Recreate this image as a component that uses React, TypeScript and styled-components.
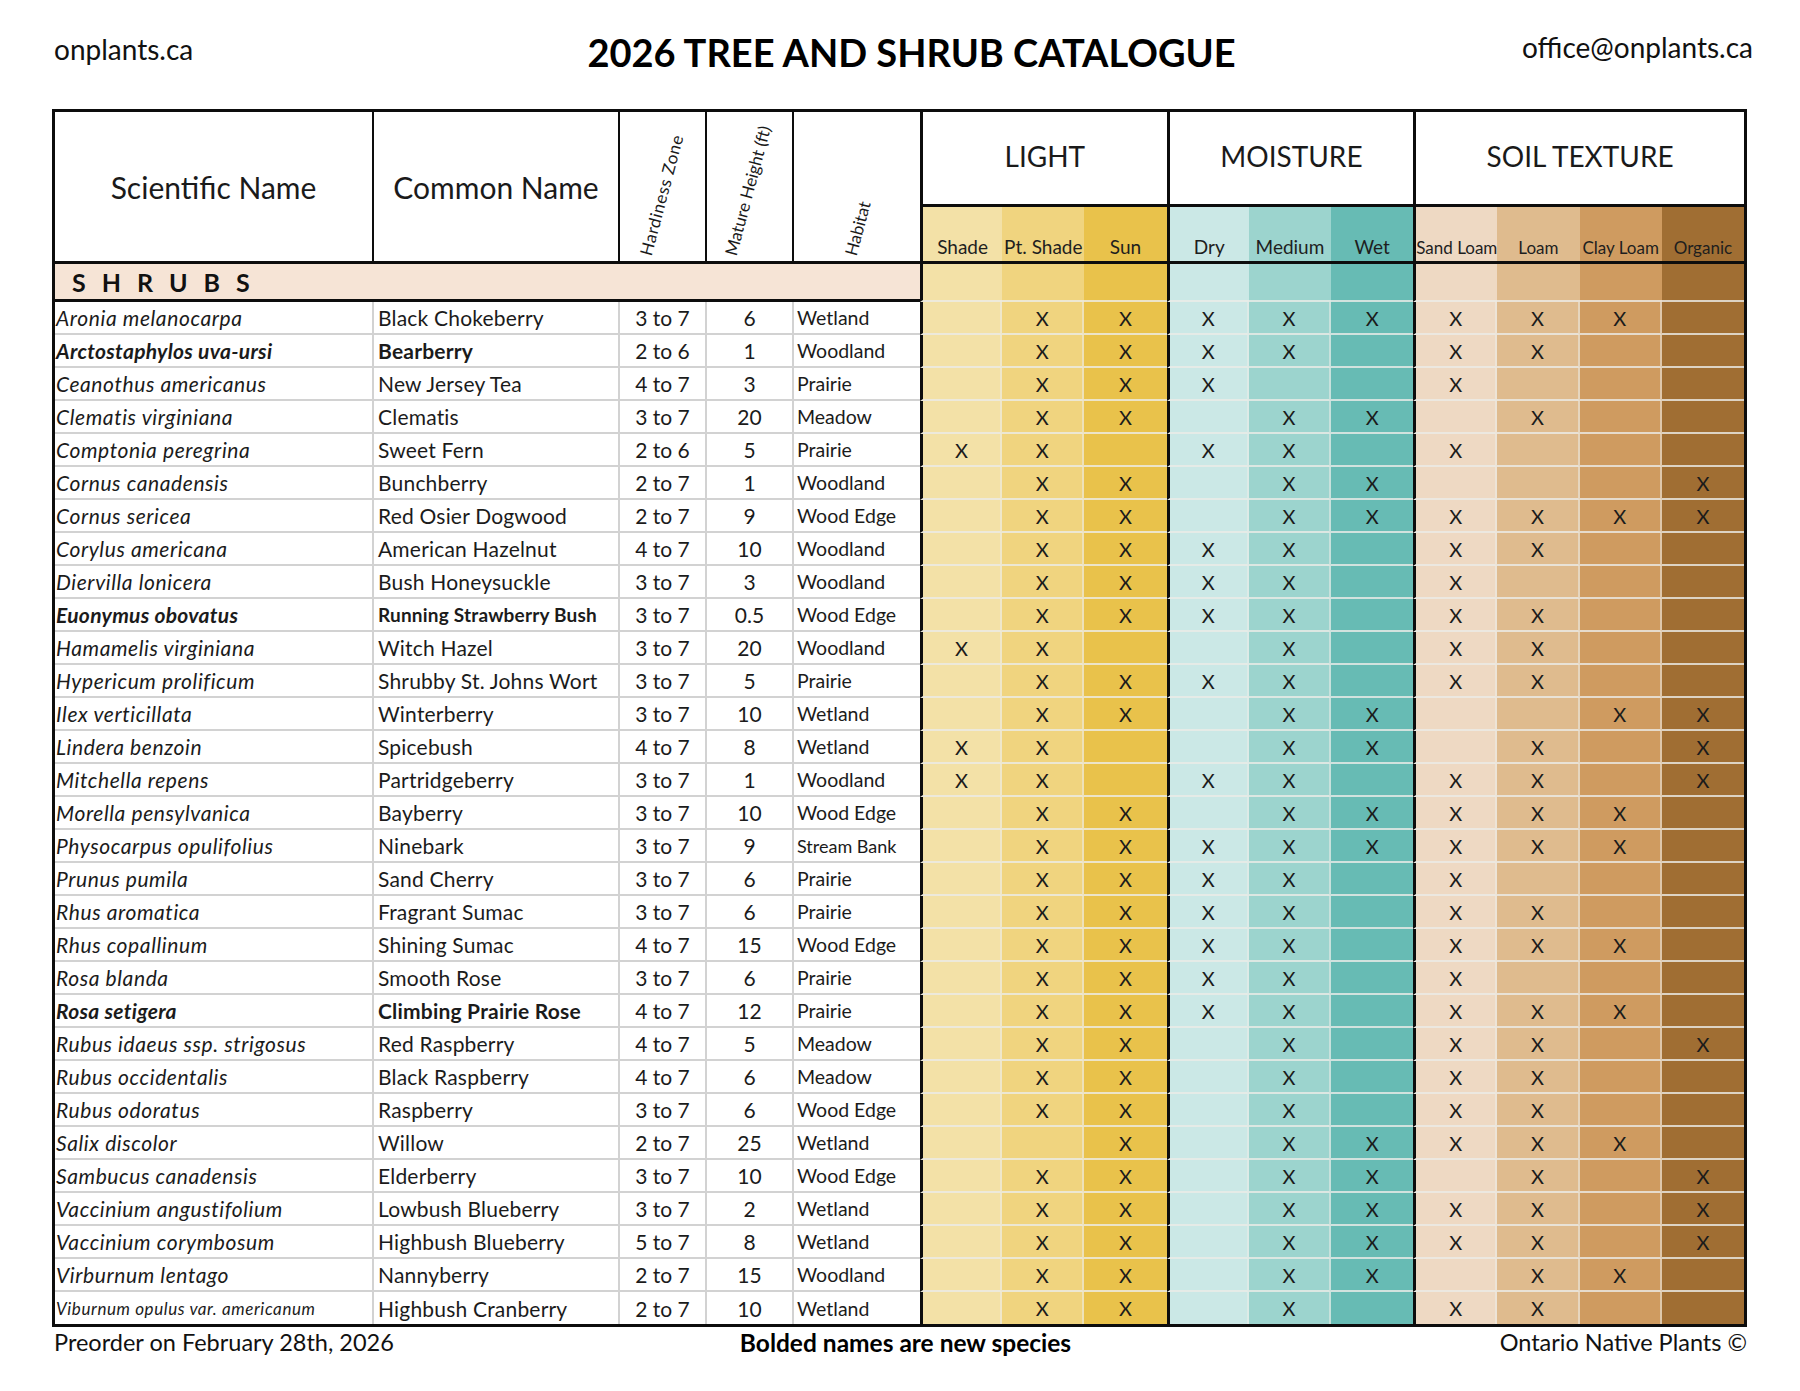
import React from "react";
import styled, { createGlobalStyle, css } from "styled-components";

const GlobalStyle = createGlobalStyle`
  html, body { margin: 0; padding: 0; background: #ffffff; }
  body { font-family: Lato, "Liberation Sans", Arial, sans-serif; color: #1b1b1b; }
  * { box-sizing: border-box; }
`;

type Col = { key: string; label: string; bg: string; start?: boolean; end?: boolean; small?: boolean };

const COLS: Col[] = [
  { key: "shade", label: "Shade", bg: "#f3e1a7", start: true },
  { key: "pt", label: "Pt. Shade", bg: "#f0d47f" },
  { key: "sun", label: "Sun", bg: "#e9c24b", end: true },
  { key: "dry", label: "Dry", bg: "#cbe8e6", start: true },
  { key: "med", label: "Medium", bg: "#9cd4ce" },
  { key: "wet", label: "Wet", bg: "#67bbb4", end: true },
  { key: "sand", label: "Sand Loam", bg: "#eed9c3", start: true, small: true },
  { key: "loam", label: "Loam", bg: "#dfbb8e", small: true },
  { key: "clay", label: "Clay Loam", bg: "#cf9b60", small: true },
  { key: "org", label: "Organic", bg: "#a06e33", end: true, small: true },
];

type Row = {
  sci: string;
  common: string;
  zone: string;
  height: string;
  habitat: string;
  marks: string;
  isNew?: boolean;
  sciSmall?: boolean;
  commonSmall?: boolean;
  habitatSmall?: boolean;
};

const ROWS: Row[] = [
  { sci: "Aronia melanocarpa", common: "Black Chokeberry", zone: "3 to 7", height: "6", habitat: "Wetland", marks: ".XXXXXXXX." },
  { sci: "Arctostaphylos uva-ursi", common: "Bearberry", zone: "2 to 6", height: "1", habitat: "Woodland", marks: ".XXXX.XX..", isNew: true },
  { sci: "Ceanothus americanus", common: "New Jersey Tea", zone: "4 to 7", height: "3", habitat: "Prairie", marks: ".XXX..X..." },
  { sci: "Clematis virginiana", common: "Clematis", zone: "3 to 7", height: "20", habitat: "Meadow", marks: ".XX.XX.X.." },
  { sci: "Comptonia peregrina", common: "Sweet Fern", zone: "2 to 6", height: "5", habitat: "Prairie", marks: "XX.XX.X..." },
  { sci: "Cornus canadensis", common: "Bunchberry", zone: "2 to 7", height: "1", habitat: "Woodland", marks: ".XX.XX...X" },
  { sci: "Cornus sericea", common: "Red Osier Dogwood", zone: "2 to 7", height: "9", habitat: "Wood Edge", marks: ".XX.XXXXXX" },
  { sci: "Corylus americana", common: "American Hazelnut", zone: "4 to 7", height: "10", habitat: "Woodland", marks: ".XXXX.XX.." },
  { sci: "Diervilla lonicera", common: "Bush Honeysuckle", zone: "3 to 7", height: "3", habitat: "Woodland", marks: ".XXXX.X..." },
  { sci: "Euonymus obovatus", common: "Running Strawberry Bush", zone: "3 to 7", height: "0.5", habitat: "Wood Edge", marks: ".XXXX.XX..", isNew: true, commonSmall: true },
  { sci: "Hamamelis virginiana", common: "Witch Hazel", zone: "3 to 7", height: "20", habitat: "Woodland", marks: "XX..X.XX.." },
  { sci: "Hypericum prolificum", common: "Shrubby St. Johns Wort", zone: "3 to 7", height: "5", habitat: "Prairie", marks: ".XXXX.XX.." },
  { sci: "Ilex verticillata", common: "Winterberry", zone: "3 to 7", height: "10", habitat: "Wetland", marks: ".XX.XX..XX" },
  { sci: "Lindera benzoin", common: "Spicebush", zone: "4 to 7", height: "8", habitat: "Wetland", marks: "XX..XX.X.X" },
  { sci: "Mitchella repens", common: "Partridgeberry", zone: "3 to 7", height: "1", habitat: "Woodland", marks: "XX.XX.XX.X" },
  { sci: "Morella pensylvanica", common: "Bayberry", zone: "3 to 7", height: "10", habitat: "Wood Edge", marks: ".XX.XXXXX." },
  { sci: "Physocarpus opulifolius", common: "Ninebark", zone: "3 to 7", height: "9", habitat: "Stream Bank", marks: ".XXXXXXXX.", habitatSmall: true },
  { sci: "Prunus pumila", common: "Sand Cherry", zone: "3 to 7", height: "6", habitat: "Prairie", marks: ".XXXX.X..." },
  { sci: "Rhus aromatica", common: "Fragrant Sumac", zone: "3 to 7", height: "6", habitat: "Prairie", marks: ".XXXX.XX.." },
  { sci: "Rhus copallinum", common: "Shining Sumac", zone: "4 to 7", height: "15", habitat: "Wood Edge", marks: ".XXXX.XXX." },
  { sci: "Rosa blanda", common: "Smooth Rose", zone: "3 to 7", height: "6", habitat: "Prairie", marks: ".XXXX.X..." },
  { sci: "Rosa setigera", common: "Climbing Prairie Rose", zone: "4 to 7", height: "12", habitat: "Prairie", marks: ".XXXX.XXX.", isNew: true },
  { sci: "Rubus idaeus ssp. strigosus", common: "Red Raspberry", zone: "4 to 7", height: "5", habitat: "Meadow", marks: ".XX.X.XX.X" },
  { sci: "Rubus occidentalis", common: "Black Raspberry", zone: "4 to 7", height: "6", habitat: "Meadow", marks: ".XX.X.XX.." },
  { sci: "Rubus odoratus", common: "Raspberry", zone: "3 to 7", height: "6", habitat: "Wood Edge", marks: ".XX.X.XX.." },
  { sci: "Salix discolor", common: "Willow", zone: "2 to 7", height: "25", habitat: "Wetland", marks: "..X.XXXXX." },
  { sci: "Sambucus canadensis", common: "Elderberry", zone: "3 to 7", height: "10", habitat: "Wood Edge", marks: ".XX.XX.X.X" },
  { sci: "Vaccinium angustifolium", common: "Lowbush Blueberry", zone: "3 to 7", height: "2", habitat: "Wetland", marks: ".XX.XXXX.X" },
  { sci: "Vaccinium corymbosum", common: "Highbush Blueberry", zone: "5 to 7", height: "8", habitat: "Wetland", marks: ".XX.XXXX.X" },
  { sci: "Virburnum lentago", common: "Nannyberry", zone: "2 to 7", height: "15", habitat: "Woodland", marks: ".XX.XX.XX." },
  { sci: "Viburnum opulus var. americanum", common: "Highbush Cranberry", zone: "2 to 7", height: "10", habitat: "Wetland", marks: ".XX.X.XX..", sciSmall: true },
];

const Page = styled.div`
  width: 1800px;
  min-height: 1391px;
  background: #fff;
`;

const TopBar = styled.header`
  display: grid;
  grid-template-columns: 1fr auto 1fr;
  align-items: start;
  height: 109px;
  padding: 0 47px 0 54px;
`;

const SiteName = styled.div`
  justify-self: start;
  margin-top: 33px;
  font-size: 28px;
  line-height: 1.2;
  color: #111;
`;

const Title = styled.h1`
  margin: 30px 0 0 16px;
  font-size: 38px;
  line-height: 1.2;
  font-weight: 700;
  color: #000;
`;

const Email = styled.div`
  justify-self: end;
  margin-top: 31px;
  font-size: 28px;
  line-height: 1.2;
  color: #111;
`;

const Catalogue = styled.section`
  margin-left: 52px;
  width: 1695px;
  border: 3px solid #0d0d0d;
  display: grid;
  grid-template-columns: 319px 246px 87px 87px 126px repeat(10, 1fr);
  grid-template-rows: 95px 57px 38px repeat(30, 33px) 32px;
`;

const NameHead = styled.div`
  grid-row: span 2;
  display: flex;
  align-items: center;
  justify-content: center;
  font-size: 30px;
  color: #1a1a1a;
  border-right: 2px solid #0d0d0d;
  border-bottom: 3px solid #0d0d0d;
  background: #fff;
`;

const RotHead = styled.div<{ $pad: number; $noRight?: boolean }>`
  grid-row: span 2;
  display: flex;
  align-items: flex-end;
  padding-left: ${(p) => p.$pad}px;
  padding-bottom: 3px;
  border-right: ${(p) => (p.$noRight ? "none" : "2px solid #0d0d0d")};
  border-bottom: 3px solid #0d0d0d;
  background: #fff;
  overflow: visible;
`;

const RotLabel = styled.span<{ $spacing: number }>`
  display: inline-block;
  white-space: nowrap;
  font-size: 17px;
  line-height: 1.1;
  letter-spacing: ${(p) => p.$spacing}px;
  color: #1a1a1a;
  transform-origin: 0 100%;
  transform: rotate(-75deg);
`;

const GroupHead = styled.div<{ $span: number }>`
  grid-column: span ${(p) => p.$span};
  display: flex;
  align-items: center;
  justify-content: center;
  padding-bottom: 5px;
  font-size: 28px;
  color: #1a1a1a;
  border-left: 3px solid #0d0d0d;
  border-bottom: 3px solid #0d0d0d;
  background: #fff;
`;

const SubHead = styled.div<{ $bg: string; $start?: boolean; $small?: boolean }>`
  display: flex;
  align-items: flex-end;
  justify-content: center;
  padding-bottom: 3px;
  background: ${(p) => p.$bg};
  font-size: ${(p) => (p.$small ? "17px" : "19px")};
  white-space: nowrap;
  color: #1e1e1e;
  border-bottom: 3px solid #0d0d0d;
  ${(p) => p.$start && css`border-left: 3px solid #0d0d0d;`}
`;

const Band = styled.div`
  grid-column: 1 / span 5;
  display: flex;
  align-items: center;
  padding-left: 17px;
  background: #f6e4d6;
  border-bottom: 3px solid #0d0d0d;
  font-size: 25px;
  font-weight: 700;
  letter-spacing: 16px;
  color: #111;
`;

const BandFill = styled.div<{ $bg: string; $start?: boolean }>`
  background: ${(p) => p.$bg};
  border-bottom: 2px solid rgba(236, 236, 232, 0.8);
  ${(p) => p.$start && css`border-left: 3px solid #0d0d0d;`}
`;

const cellBase = css<{ $last?: boolean }>`
  display: flex;
  align-items: center;
  font-size: 21px;
  white-space: nowrap;
  overflow: hidden;
  border-bottom: ${(p) => (p.$last ? "none" : "2px solid #d2d2d2")};
  color: #1b1b1b;
`;

const SciCell = styled.div<{ $last?: boolean; $bold?: boolean; $small?: boolean }>`
  ${cellBase};
  padding-left: 1px;
  font-style: italic;
  font-weight: ${(p) => (p.$bold ? 700 : 400)};
  font-size: ${(p) => (p.$small ? "17px" : "21px")};
  letter-spacing: ${(p) => (p.$bold ? "0.3px" : "0.6px")};
  border-right: 2px solid #d2d2d2;
`;

const CommonCell = styled.div<{ $last?: boolean; $bold?: boolean; $small?: boolean }>`
  ${cellBase};
  padding-left: 4px;
  font-weight: ${(p) => (p.$bold ? 700 : 400)};
  font-size: ${(p) => (p.$small ? "19px" : "21px")};
  letter-spacing: 0.2px;
  border-right: 2px solid #d2d2d2;
`;

const NumCell = styled.div<{ $last?: boolean }>`
  ${cellBase};
  justify-content: center;
  border-right: 2px solid #d2d2d2;
`;

const HabitatCell = styled.div<{ $last?: boolean; $small?: boolean }>`
  ${cellBase};
  padding-left: 3px;
  font-size: ${(p) => (p.$small ? "18px" : "19.5px")};
`;

const MarkCell = styled.div<{ $bg: string; $start?: boolean; $end?: boolean; $last?: boolean }>`
  display: flex;
  align-items: center;
  justify-content: center;
  background: ${(p) => p.$bg};
  font-size: 20px;
  color: #1b1b1b;
  border-bottom: ${(p) => (p.$last ? "none" : "2px solid rgba(236, 236, 232, 0.8)")};
  border-right: ${(p) => (p.$end ? "none" : "2px solid rgba(236, 236, 232, 0.55)")};
  ${(p) => p.$start && css`border-left: 3px solid #0d0d0d;`}
`;

const Footer = styled.footer`
  margin-left: 52px;
  width: 1695px;
  display: grid;
  grid-template-columns: 1fr auto 1fr;
  align-items: start;
  padding: 1px 0 0 2px;
  font-size: 23.5px;
  line-height: 1.2;
  color: #111;
`;

const FootLeft = styled.div`
  justify-self: start;
`;

const FootCenter = styled.div`
  justify-self: center;
  font-size: 24.5px;
  font-weight: 700;
  padding-left: 10px;
  color: #000;
`;

const FootRight = styled.div`
  justify-self: end;
`;

export default function App() {
  return (
    <Page>
      <GlobalStyle />
      <TopBar>
        <SiteName>onplants.ca</SiteName>
        <Title>2026 TREE AND SHRUB CATALOGUE</Title>
        <Email>office@onplants.ca</Email>
      </TopBar>

      <Catalogue>
        <NameHead>Scientific Name</NameHead>
        <NameHead>Common Name</NameHead>
        <RotHead $pad={35}>
          <RotLabel $spacing={0.6}>Hardiness Zone</RotLabel>
        </RotHead>
        <RotHead $pad={33}>
          <RotLabel $spacing={0}>Mature Height (ft)</RotLabel>
        </RotHead>
        <RotHead $pad={66} $noRight>
          <RotLabel $spacing={0}>Habitat</RotLabel>
        </RotHead>
        <GroupHead $span={3}>LIGHT</GroupHead>
        <GroupHead $span={3}>MOISTURE</GroupHead>
        <GroupHead $span={4}>SOIL TEXTURE</GroupHead>
        {COLS.map((c) => (
          <SubHead key={c.key} $bg={c.bg} $start={c.start} $small={c.small}>
            {c.label}
          </SubHead>
        ))}

        <Band>SHRUBS</Band>
        {COLS.map((c) => (
          <BandFill key={c.key} $bg={c.bg} $start={c.start} />
        ))}

        {ROWS.map((r, i) => {
          const last = i === ROWS.length - 1;
          return (
            <React.Fragment key={r.sci}>
              <SciCell $last={last} $bold={r.isNew} $small={r.sciSmall}>
                {r.sci}
              </SciCell>
              <CommonCell $last={last} $bold={r.isNew} $small={r.commonSmall}>
                {r.common}
              </CommonCell>
              <NumCell $last={last}>{r.zone}</NumCell>
              <NumCell $last={last}>{r.height}</NumCell>
              <HabitatCell $last={last} $small={r.habitatSmall}>
                {r.habitat}
              </HabitatCell>
              {COLS.map((c, j) => (
                <MarkCell key={c.key} $bg={c.bg} $start={c.start} $end={c.end} $last={last}>
                  {r.marks[j] === "X" ? "X" : ""}
                </MarkCell>
              ))}
            </React.Fragment>
          );
        })}
      </Catalogue>

      <Footer>
        <FootLeft>Preorder on February 28th, 2026</FootLeft>
        <FootCenter>Bolded names are new species</FootCenter>
        <FootRight>Ontario Native Plants ©</FootRight>
      </Footer>
    </Page>
  );
}
